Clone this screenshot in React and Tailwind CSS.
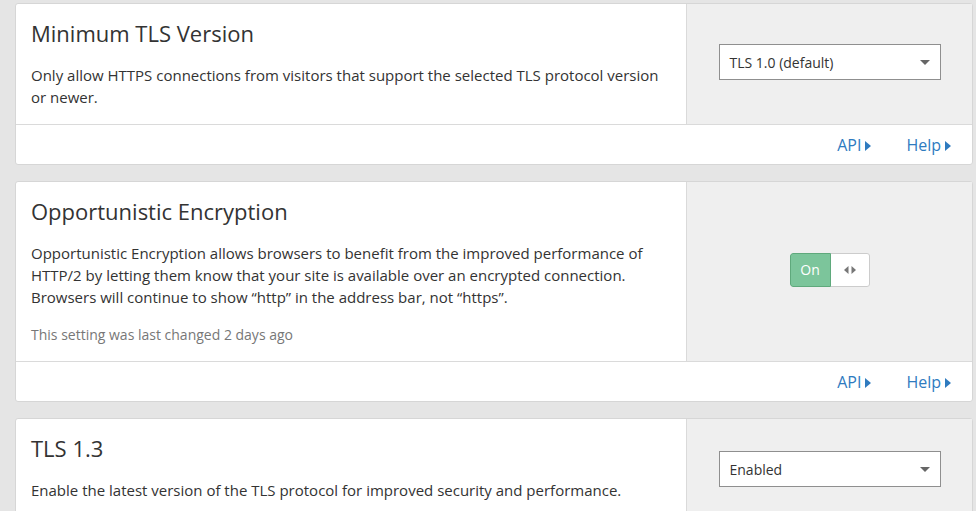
import React from "react";

const font = { fontFamily: '"Open Sans", "Noto Sans", sans-serif' };

function Caret() {
  return (
    <svg width="10" height="5" viewBox="0 0 10 5" className="ml-auto">
      <path d="M0 0 L10 0 L5 5 Z" fill="#666" />
    </svg>
  );
}

function Select({ label, up = false }) {
  return (
    <div
      className={
        up
          ? "w-[222px] h-[36px] -mt-[4px] border border-[#8f8f8f] bg-white flex items-center pl-[10px] pr-[10px] text-[14px] text-[#333]"
          : "w-[222px] h-[36px] mt-[2px] border border-[#8f8f8f] bg-white flex items-center pl-[10px] pr-[10px] text-[14px] text-[#333]"
      }
    >
      <span>{label}</span>
      <Caret />
    </div>
  );
}

function Tri() {
  return (
    <svg width="6" height="10" viewBox="0 0 6 10" className="ml-[4px] mt-[2px]">
      <path d="M0 0 L6 5 L0 10 Z" fill="#2f7bbf" />
    </svg>
  );
}

function Footer() {
  return (
    <div className="h-[40px] border-t border-[#dadada] flex items-center justify-end pr-[21px] gap-[35px] text-[16px] text-[#2f7bbf]">
      <span className="flex items-center">API<Tri /></span>
      <span className="flex items-center">Help<Tri /></span>
    </div>
  );
}

function Toggle() {
  return (
    <div className="flex h-[34px] w-[80px] rounded-[3px] overflow-hidden -mt-[4px]">
      <div className="w-[41px] bg-[#7cc59b] border border-[#5fa97c] rounded-l-[3px] text-white text-[14px] flex items-center justify-center">
        On
      </div>
      <div className="flex-1 bg-white border border-l-0 border-[#cccccc] rounded-r-[3px] flex items-center justify-center">
        <svg width="12" height="8" viewBox="0 0 12 8">
          <path d="M0 4 L4.5 0 L4.5 8 Z" fill="#777" />
          <path d="M12 4 L7.5 0 L7.5 8 Z" fill="#777" />
        </svg>
      </div>
    </div>
  );
}

function Card({ title, children, control, footer = true }) {
  return (
    <div className="bg-white border border-[#d6d6d6] rounded-[3px] shrink-0">
      <div className="flex">
        <div className="flex-1 pl-[15px] pr-[20px] pt-[14px] pb-[16px]">
          <h2 className="text-[22px] leading-[30px] text-[#333] mb-[16px]">{title}</h2>
          {children}
        </div>
        <div className="w-[286px] bg-[#efefef] border-l border-[#dadada] flex items-center justify-center">
          {control}
        </div>
      </div>
      {footer && <Footer />}
    </div>
  );
}

export default function App() {
  return (
    <div style={font} className="h-[511px] overflow-hidden bg-[#e5e5e5] pl-[15px] pr-[3px] pt-[3px] flex flex-col gap-[16px]">
      <Card title="Minimum TLS Version" control={<Select label="TLS 1.0 (default)" up />}>
        <p className="text-[15px] leading-[22px] text-[#333]">
          Only allow HTTPS connections from visitors that support the selected TLS protocol version
          or newer.
        </p>
      </Card>
      <Card title="Opportunistic Encryption" control={<Toggle />}>
        <p className="text-[15px] leading-[22px] text-[#333]">
          Opportunistic Encryption allows browsers to benefit from the improved performance of
          HTTP/2 by letting them know that your site is available over an encrypted connection.
          Browsers will continue to show “http” in the address bar, not “https”.
        </p>
        <p className="text-[14px] leading-[20px] text-[#777] mt-[17px]">
          This setting was last changed 2 days ago
        </p>
      </Card>
      <Card title="TLS 1.3" control={<Select label="Enabled" />}>
        <p className="text-[15px] leading-[22px] text-[#333]">
          Enable the latest version of the TLS protocol for improved security and performance.
        </p>
      </Card>
    </div>
  );
}
